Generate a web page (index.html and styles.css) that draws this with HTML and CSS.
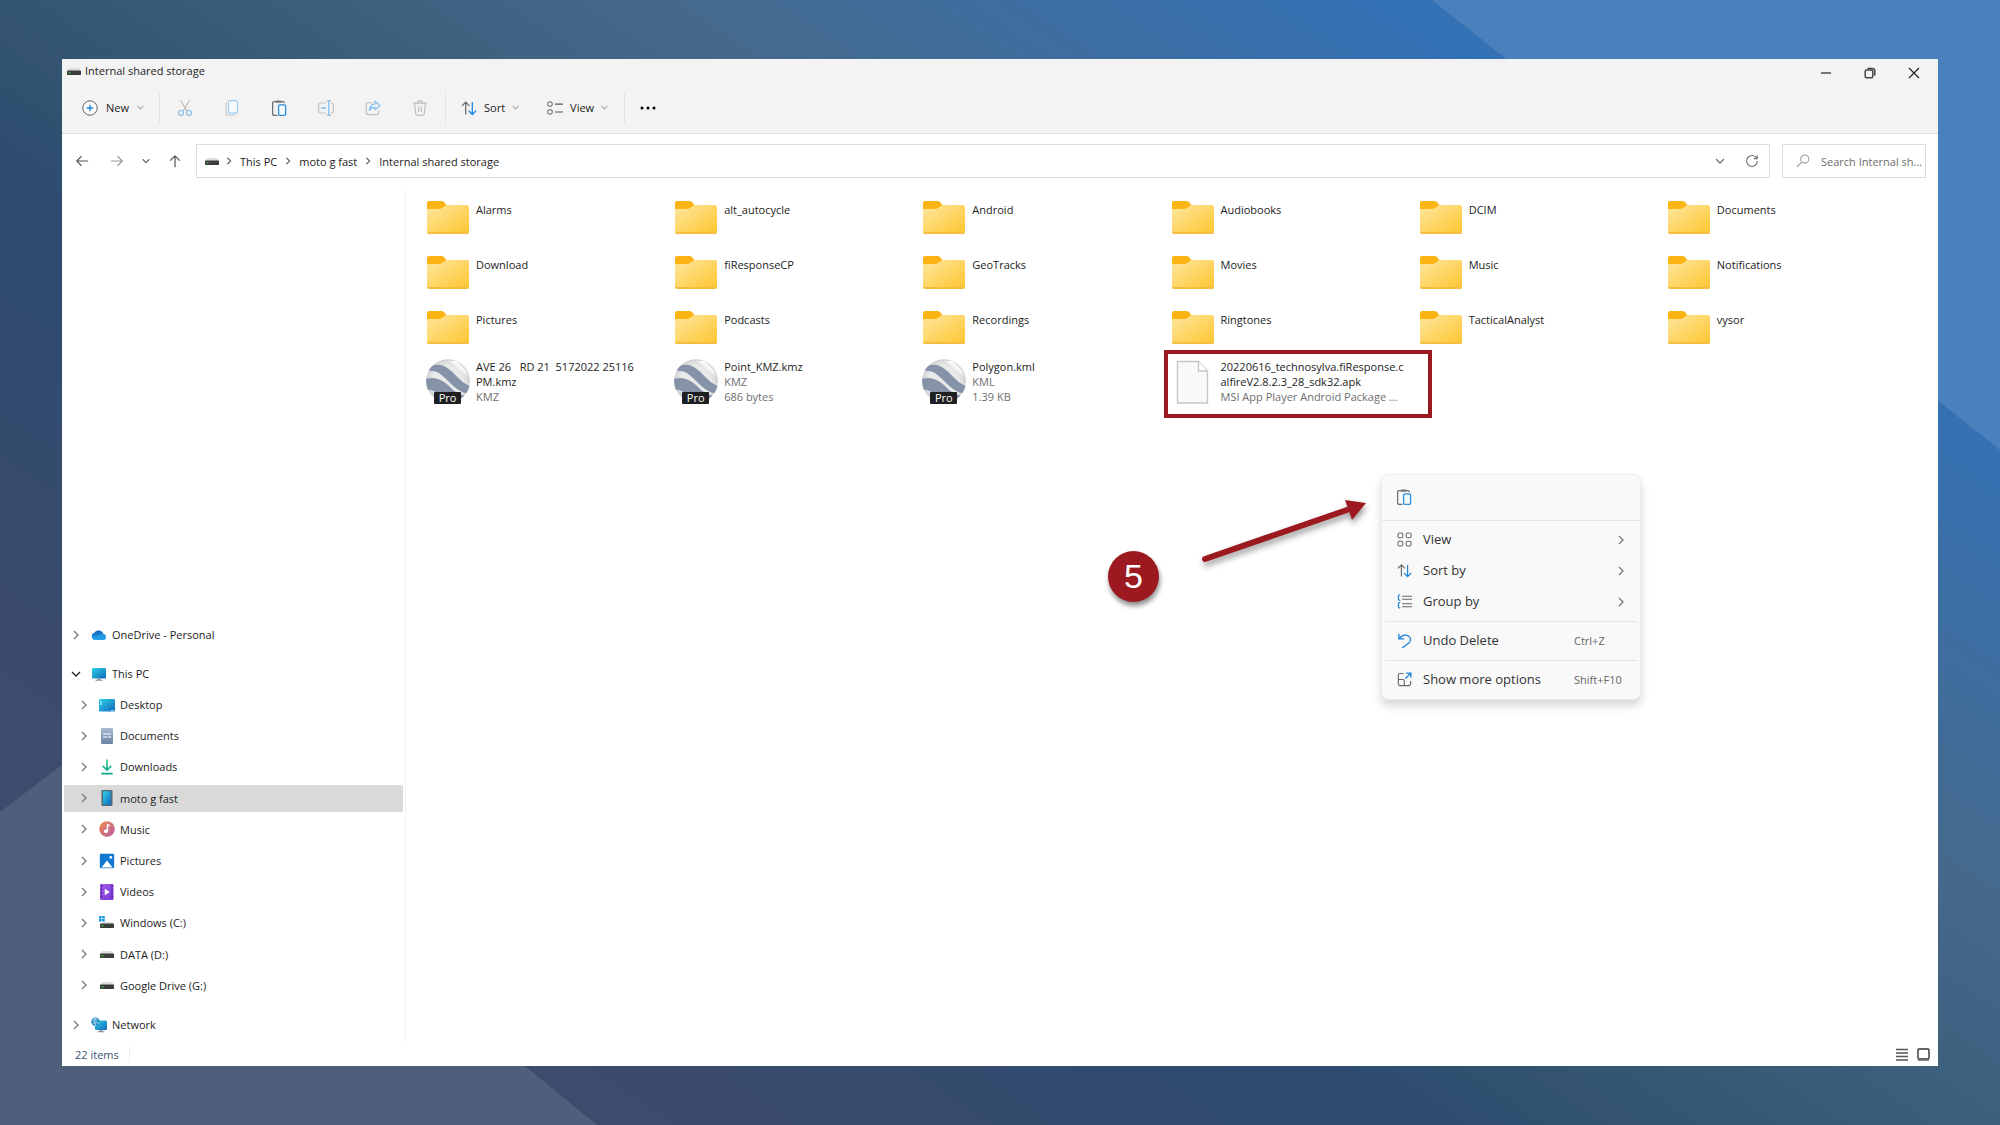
FILE: index.html
```html
<!DOCTYPE html>
<html lang="en">
<head>
<meta charset="utf-8">
<title>Internal shared storage</title>
<link rel="stylesheet" href="styles.css">
</head>
<body>
<svg class="defs" width="0" height="0" aria-hidden="true">
  <defs>
    <linearGradient id="g-folder" x1="0" y1="0" x2="1" y2="1"><stop offset="0" stop-color="#ffe7a0"/><stop offset="1" stop-color="#fec52e"/></linearGradient>
    <linearGradient id="g-screen" x1="0" y1="0" x2="1" y2="1"><stop offset="0" stop-color="#2fd0e6"/><stop offset="1" stop-color="#1069bd"/></linearGradient>
    <linearGradient id="g-cloud" x1="0" y1="0" x2="0" y2="1"><stop offset="0" stop-color="#0d5fc0"/><stop offset="1" stop-color="#28a8ea"/></linearGradient>
    <linearGradient id="g-doc" x1="0" y1="0" x2="0" y2="1"><stop offset="0" stop-color="#a9b9d0"/><stop offset="1" stop-color="#6a83a8"/></linearGradient>
    <linearGradient id="g-music" x1="0" y1="0" x2="1" y2="1"><stop offset="0" stop-color="#f08a4b"/><stop offset="1" stop-color="#b65aa8"/></linearGradient>
    <linearGradient id="g-down" x1="0" y1="0" x2="0" y2="1"><stop offset="0" stop-color="#35c88a"/><stop offset="1" stop-color="#12a892"/></linearGradient>
    <linearGradient id="g-video" x1="0" y1="0" x2="1" y2="1"><stop offset="0" stop-color="#a35bea"/><stop offset="1" stop-color="#7a38d8"/></linearGradient>
    <radialGradient id="g-globe" cx=".5" cy=".5" r=".5"><stop offset=".7" stop-color="#e9e9ea"/><stop offset="1" stop-color="#cfd0d2"/></radialGradient>
    <clipPath id="c-globe"><circle cx="22" cy="22" r="22"/></clipPath>
  </defs>
  <symbol id="folder" viewBox="0 0 44 46">
    <path d="M1 9a2 2 0 0 1 2-2h12q2 0 3 1l3 4v6H1z" fill="#fbb414"/>
    <path d="M1 16q0-1 1-1h11q2 0 3-1l3-2q1-1 3-1h19q2 0 2 2v25q0 2-2 2H3q-2 0-2-2z" fill="url(#g-folder)"/>
    <path d="M1 37v1q0 2 2 2h38q2 0 2-2v-1q0 1-2 1H3q-2 0-2-1z" fill="#f3be40"/>
  </symbol>
  <symbol id="globe" viewBox="0 0 44 46">
    <g clip-path="url(#c-globe)">
      <circle cx="22" cy="22" r="22" fill="url(#g-globe)"/>
      <path d="M3 9C10 4 17 5 24 11s13 14 20 16v8c-10-1-17-8-23-14S10 11 3 12z" fill="#8692a7"/>
      <path d="M0 20c9-3 17 1 24 8s12 9 19 9l-4 7H20C14 38 9 29 0 31z" fill="#8692a7"/>
      <path d="M22 2c8 3 14 11 20 15l-3-7-8-8z" fill="#f7f7f7"/>
    </g>
    <rect x="8" y="33" width="27" height="12" rx="1" fill="#1d1f21"/>
  </symbol>
  <symbol id="file" viewBox="0 0 44 46">
    <path d="M6.500 2.500h21l9 9.500v32h-30z" fill="#f9f9f9" stroke="#c6c6c6" stroke-width="1.400"/>
    <path d="M27.500 2.500V12h9" fill="#fff" stroke="#c6c6c6" stroke-width="1.400"/>
  </symbol>
  <symbol id="drive" viewBox="0 0 16 16">
    <path d="M3 5h10l2 3H1z" fill="#dedede"/><rect x="1" y="7.500" width="14" height="4.500" rx=".8" fill="#3a3d3b"/><rect x="2.500" y="9" width="2" height="1.500" fill="#3fae49"/>
  </symbol>
  <symbol id="windrive" viewBox="0 0 16 16">
    <path d="M4 7h9l2 2H1z" fill="#dedede"/><rect x="1" y="8.500" width="14" height="4.500" rx=".8" fill="#3a3d3b"/><rect x="2.500" y="10" width="2" height="1.500" fill="#3fae49"/>
    <path d="M0 1h2.600v2.400H0zM3.200 1h2.600v2.400H3.200zM0 4h2.600v2.400H0zM3.200 4h2.600v2.400H3.200z" fill="#1496e0"/>
  </symbol>
  <symbol id="cloud" viewBox="0 0 16 16">
    <path d="M4 13a3.700 3.700 0 0 1-.7-7.200A5 5 0 0 1 12.300 7 3.100 3.100 0 0 1 13 13z" fill="url(#g-cloud)"/>
    <path d="M2 12 9 7.500q2-.8 3.500-.3A3.100 3.100 0 0 1 13 13H4q-1.300-.2-2-1z" fill="#2aa0ea" opacity=".7"/>
  </symbol>
  <symbol id="pc" viewBox="0 0 16 16"><rect x="1" y="2" width="14" height="10.500" rx="1" fill="url(#g-screen)"/><path d="M6.500 12.500h3v1.300h2v1h-7v-1h2z" fill="#8a9299"/></symbol>
  <symbol id="desktop" viewBox="0 0 16 16"><rect x="0" y="2" width="16" height="12.500" rx="1.200" fill="url(#g-screen)"/><path d="M2 4v4" stroke="#c9f4fb" stroke-width="1"/><path d="M12 13.500h3" stroke="#9edcf5" stroke-width="1"/></symbol>
  <symbol id="document" viewBox="0 0 16 16"><rect x="2" y="0" width="12" height="16" rx="1.200" fill="url(#g-doc)"/><path d="M4 6h8M4 9h4M9 9h3" stroke="#fff" stroke-width="1.200"/></symbol>
  <symbol id="download" viewBox="0 0 16 16"><path d="M8 .5v10M3.700 6.800 8 11l4.300-4.200M2.300 14.700h11.400" fill="none" stroke="url(#g-down)" stroke-width="1.700"/></symbol>
  <symbol id="phone" viewBox="0 0 16 16"><rect x="2.500" y="0" width="11" height="16" rx="1.300" fill="#566572"/><rect x="4" y="1.200" width="8" height="13.600" fill="url(#g-screen)"/></symbol>
  <symbol id="music" viewBox="0 0 16 16"><circle cx="8" cy="8" r="7.800" fill="url(#g-music)"/><path d="M8.500 10V3.500l2.500 1.300" fill="none" stroke="#fff" stroke-width="1.300"/><circle cx="7" cy="10.200" r="1.900" fill="#fff"/></symbol>
  <symbol id="picture" viewBox="0 0 16 16"><rect x=".8" y=".8" width="14.400" height="14.400" rx="1.200" fill="#1378cf"/><path d="m2.500 14.500 5.500-7 5.500 7z" fill="#fff"/><circle cx="11.800" cy="4.300" r="1.400" fill="#fff"/></symbol>
  <symbol id="video" viewBox="0 0 16 16"><rect x="1" y="0" width="13.500" height="16" rx="1" fill="url(#g-video)"/><path d="M2.500 1v14M13 1v14" stroke="#4d1a9c" stroke-width="1.300" stroke-dasharray="2 1.500"/><path d="m5.800 4.800 5 3.200-5 3.200z" fill="#fff"/></symbol>
  <symbol id="network" viewBox="0 0 16 16"><rect x="4" y="3.500" width="12" height="9.500" rx="1" fill="url(#g-screen)"/><path d="M8.500 13h3v1.200h2v1h-7v-1h2z" fill="#8a9299"/><circle cx="4.500" cy="4.800" r="4.300" fill="#2e93c8"/><path d="M1.500 3.500Q4 1 6.500 2.500M2 6.500q3-3 6 0M4.500.5Q2.500 5 5 9" fill="none" stroke="#a8dcf2" stroke-width=".9"/></symbol>
  <symbol id="right" viewBox="0 0 10 10"><path d="m3 1 4 4-4 4" fill="none" stroke="currentColor" stroke-width="1.300"/></symbol>
  <symbol id="down" viewBox="0 0 10 10"><path d="m1 3 4 4 4-4" fill="none" stroke="currentColor" stroke-width="1.300"/></symbol>
  <symbol id="plus" viewBox="0 0 16 16"><circle cx="8" cy="8" r="7.200" fill="#fafafa" stroke="#666"/><path d="M8 4.800v6.400M4.800 8h6.400" stroke="#1f86dc" stroke-width="1.300"/></symbol>
  <symbol id="cut" viewBox="0 0 16 16"><path d="M3.500.5 10 11M12.500.5 6 11" stroke="#b9b9b9" stroke-width="1.100"/><circle cx="4" cy="13" r="2.500" fill="none" stroke="#85bdec" stroke-width="1.200"/><circle cx="12" cy="13" r="2.500" fill="none" stroke="#85bdec" stroke-width="1.200"/></symbol>
  <symbol id="copy" viewBox="0 0 16 16"><rect x="4.500" y=".6" width="9" height="12.600" rx="1.600" fill="#f5fafe" stroke="#9ccbf0" stroke-width="1.200"/><path d="M3 2.500Q2 3 2 4.500v8q0 2.800 2.800 2.800h4.400q1.300 0 2-.8" fill="none" stroke="#c4c4c4" stroke-width="1.100"/></symbol>
  <symbol id="paste" viewBox="0 0 16 16"><path d="M6.500 15.400H3.300q-1.700 0-1.700-1.700V3.300q0-1.700 1.700-1.700h8.400q1.600 0 1.600 1.700" fill="none" stroke="#6b6b6b" stroke-width="1.200"/><rect x="4.500" y=".4" width="6" height="2.400" rx="1" fill="#777"/><rect x="7.600" y="4.900" width="7" height="10.500" rx="1.300" fill="#f5fafe" stroke="#2b8de0" stroke-width="1.300"/></symbol>
  <symbol id="rename" viewBox="0 0 16 16"><path d="M8.500 3H2.300Q.6 3 .6 4.700v6.600Q.6 13 2.300 13h6.200M13 3q2.400 0 2.400 2v6q0 2-2.400 2" fill="none" stroke="#c2c2c2" stroke-width="1.200"/><path d="M8.800.6h4M8.800 15.400h4M10.800.6v14.800M3 8h5" fill="none" stroke="#85bdec" stroke-width="1.300"/></symbol>
  <symbol id="share" viewBox="0 0 16 16"><path d="M7 2.600H3.300q-2 0-2 2v8q0 2 2 2h8.400q2 0 2-2v-2" fill="none" stroke="#c2c2c2" stroke-width="1.200"/><path d="M10 1.200 15 5.600l-5 4.300V7.400Q6.500 7.200 4.500 10.500 5 4.300 10 3.800z" fill="none" stroke="#85bdec" stroke-width="1.200" stroke-linejoin="round"/></symbol>
  <symbol id="trash" viewBox="0 0 16 16"><path d="M1 3.200h14M5.500 3q0-2.300 2.500-2.300T10.500 3M2.500 3.500l1.200 10q.2 1.800 2 1.800h4.600q1.800 0 2-1.800l1.200-10M6.600 6.500v5.500M9.400 6.500v5.500" fill="none" stroke="#c0c0c0" stroke-width="1.200"/></symbol>
  <symbol id="sort" viewBox="0 0 16 16"><path d="M4.700 14.500V2M1 5.800 4.700 2l3.700 3.800" fill="none" stroke="#666" stroke-width="1.200"/><path d="M11.300 2v12.500M7.700 10.700l3.600 3.800 3.700-3.800" fill="none" stroke="#1f86dc" stroke-width="1.300"/></symbol>
  <symbol id="view" viewBox="0 0 16 16"><rect x=".8" y="2" width="4.400" height="4.200" rx="1.400" fill="none" stroke="#555"/><rect x=".8" y="9.800" width="4.400" height="4.200" rx="1.400" fill="none" stroke="#555"/><path d="M8 4.200h8M8 12h8" stroke="#555" stroke-width="1.200"/></symbol>
  <symbol id="grid" viewBox="0 0 16 16"><g fill="none" stroke="#666" stroke-width="1.100"><rect x="1" y="1" width="5.200" height="5.200" rx="1.600"/><rect x="9.800" y="1" width="5.200" height="5.200" rx="1.600"/><rect x="1" y="9.800" width="5.200" height="5.200" rx="1.600"/><rect x="9.800" y="9.800" width="5.200" height="5.200" rx="1.600"/></g></symbol>
  <symbol id="group" viewBox="0 0 16 16"><path d="M5.500 2.500H16M5.500 5.500H16M5.500 10.500H16M5.500 13.500H16" stroke="#666" stroke-width="1.100"/><path d="M3.500.8q-2 0-2 1.700v2.700q0 1.500 2 1.500M3.500 9q-2 0-2 1.700v2.700q0 1.700 2 1.700" fill="none" stroke="#1f86dc" stroke-width="1.300"/></symbol>
  <symbol id="undo" viewBox="0 0 16 16"><path d="M2 .8v5.400h5.700M2.300 6q2.500-3.500 6-3.700Q13 2.200 14.300 6q.6 2.500-1.300 4.500L5.500 16" fill="none" stroke="#1f86dc" stroke-width="1.400"/></symbol>
  <symbol id="more" viewBox="0 0 16 16"><path d="M7 1.600H3q-1.600 0-1.600 1.600v9.600q0 1.700 1.600 1.700h9.800q1.700 0 1.700-1.700V9.500M1.500 8h4.700q1.600 0 1.600 1.600v4.900" fill="none" stroke="#666" stroke-width="1.200"/><path d="M9.800 1.200h5v5M14.600 1.400 9 7" fill="none" stroke="#1f86dc" stroke-width="1.500"/></symbol>
  <symbol id="arrow" viewBox="0 0 16 16"><path d="M15 8H2M7.500 2.500 2 8l5.500 5.500" fill="none" stroke="currentColor" stroke-width="1.400"/></symbol>
  <symbol id="refresh" viewBox="0 0 16 16"><path d="M13.500 5A6.200 6.200 0 1 0 14.200 8M14 1.500V5.300h-4" fill="none" stroke="#777" stroke-width="1.300"/></symbol>
  <symbol id="lens" viewBox="0 0 16 16"><circle cx="10" cy="5.800" r="4.600" fill="none" stroke="#999" stroke-width="1.200"/><path d="m6.700 9.300-5.700 5.500" stroke="#999" stroke-width="1.200"/></symbol>
</svg>

<svg class="backdrop" viewBox="0 0 2000 1125" preserveAspectRatio="none" aria-hidden="true">
  <path d="M1432 0H2000V450z" fill="#4a80bb"/>
  <path d="M0 812 112 727 597 1125H0z" fill="#4f5e7b"/>
</svg>

<div class="window">
  <header class="top">
    <div class="titlebar">
      <svg class="i16"><use href="#drive"/></svg>
      <h1>Internal shared storage</h1>
      <div class="controls">
        <button aria-label="Minimize"><svg class="i12" viewBox="0 0 12 12"><path d="M1 6h10" stroke="#333" stroke-width="1.300"/></svg></button>
        <button aria-label="Restore"><svg class="i12" viewBox="0 0 12 12"><rect x="1.200" y="3" width="7.600" height="7.800" rx="1.500" fill="none" stroke="#444" stroke-width="1.500"/><path d="M3.500 1.500H8Q10.800 1.500 10.800 4v4.500" fill="none" stroke="#444" stroke-width="1.500"/></svg></button>
        <button aria-label="Close"><svg class="i12" viewBox="0 0 12 12"><path d="m1 1 10 10M11 1 1 11" stroke="#222" stroke-width="1.200"/></svg></button>
      </div>
    </div>
    <div class="toolbar">
      <button class="cmd cmd-new"><svg class="i16"><use href="#plus"/></svg>New<svg class="i7"><use href="#down"/></svg></button>
      <div class="tools">
        <button aria-label="Cut"><svg class="i16"><use href="#cut"/></svg></button>
        <button aria-label="Copy"><svg class="i16"><use href="#copy"/></svg></button>
        <button aria-label="Paste"><svg class="i16"><use href="#paste"/></svg></button>
        <button aria-label="Rename"><svg class="i16"><use href="#rename"/></svg></button>
        <button aria-label="Share"><svg class="i16"><use href="#share"/></svg></button>
        <button aria-label="Delete"><svg class="i16"><use href="#trash"/></svg></button>
      </div>
      <div class="arrange">
        <button class="cmd"><svg class="i16"><use href="#sort"/></svg>Sort<svg class="i7"><use href="#down"/></svg></button>
        <button class="cmd"><svg class="i16"><use href="#view"/></svg>View<svg class="i7"><use href="#down"/></svg></button>
      </div>
      <button class="dots" aria-label="See more"><svg width="16" height="4" viewBox="0 0 16 4"><circle cx="2" cy="2" r="1.500"/><circle cx="8" cy="2" r="1.500"/><circle cx="14" cy="2" r="1.500"/></svg></button>
    </div>
  </header>

  <div class="navbar">
    <div class="history">
      <button aria-label="Back"><svg class="i14"><use href="#arrow"/></svg></button>
      <button class="dim" aria-label="Forward"><svg class="i14 flip"><use href="#arrow"/></svg></button>
      <button class="recent" aria-label="Recent locations"><svg class="i8"><use href="#down"/></svg></button>
      <button aria-label="Up"><svg class="i14 up"><use href="#arrow"/></svg></button>
    </div>
    <nav class="address" aria-label="Address">
      <svg class="i16"><use href="#drive"/></svg>
      <svg class="i8"><use href="#right"/></svg><a href="#">This PC</a>
      <svg class="i8"><use href="#right"/></svg><a href="#">moto g fast</a>
      <svg class="i8"><use href="#right"/></svg><a href="#">Internal shared storage</a>
      <button class="push" aria-label="Previous locations"><svg class="i10"><use href="#down"/></svg></button>
      <button aria-label="Refresh"><svg class="i14"><use href="#refresh"/></svg></button>
    </nav>
    <label class="search"><svg class="i14"><use href="#lens"/></svg><input type="text" aria-label="Search" placeholder="Search Internal sh..."></label>
  </div>

  <div class="body">
    <nav class="tree" aria-label="Folders">
      <a class="node" href="#"><svg class="i10"><use href="#right"/></svg><svg class="i16"><use href="#cloud"/></svg>OneDrive - Personal</a>
      <a class="node open" href="#"><svg class="i10"><use href="#down"/></svg><svg class="i16"><use href="#pc"/></svg>This PC</a>
      <ul>
        <li><a class="node" href="#"><svg class="i10"><use href="#right"/></svg><svg class="i16"><use href="#desktop"/></svg>Desktop</a></li>
        <li><a class="node" href="#"><svg class="i10"><use href="#right"/></svg><svg class="i16"><use href="#document"/></svg>Documents</a></li>
        <li><a class="node" href="#"><svg class="i10"><use href="#right"/></svg><svg class="i16"><use href="#download"/></svg>Downloads</a></li>
        <li><a class="node selected" href="#"><svg class="i10"><use href="#right"/></svg><svg class="i16"><use href="#phone"/></svg>moto g fast</a></li>
        <li><a class="node" href="#"><svg class="i10"><use href="#right"/></svg><svg class="i16"><use href="#music"/></svg>Music</a></li>
        <li><a class="node" href="#"><svg class="i10"><use href="#right"/></svg><svg class="i16"><use href="#picture"/></svg>Pictures</a></li>
        <li><a class="node" href="#"><svg class="i10"><use href="#right"/></svg><svg class="i16"><use href="#video"/></svg>Videos</a></li>
        <li><a class="node" href="#"><svg class="i10"><use href="#right"/></svg><svg class="i16"><use href="#windrive"/></svg>Windows (C:)</a></li>
        <li><a class="node" href="#"><svg class="i10"><use href="#right"/></svg><svg class="i16"><use href="#drive"/></svg>DATA (D:)</a></li>
        <li><a class="node" href="#"><svg class="i10"><use href="#right"/></svg><svg class="i16"><use href="#drive"/></svg>Google Drive (G:)</a></li>
      </ul>
      <a class="node network" href="#"><svg class="i10"><use href="#right"/></svg><svg class="i16"><use href="#network"/></svg>Network</a>
    </nav>

    <main class="pane">
      <div class="files">
        <div class="item"><svg class="big"><use href="#folder"/></svg><p>Alarms</p></div>
        <div class="item"><svg class="big"><use href="#folder"/></svg><p>alt_autocycle</p></div>
        <div class="item"><svg class="big"><use href="#folder"/></svg><p>Android</p></div>
        <div class="item"><svg class="big"><use href="#folder"/></svg><p>Audiobooks</p></div>
        <div class="item"><svg class="big"><use href="#folder"/></svg><p>DCIM</p></div>
        <div class="item"><svg class="big"><use href="#folder"/></svg><p>Documents</p></div>
        <div class="item"><svg class="big"><use href="#folder"/></svg><p>Download</p></div>
        <div class="item"><svg class="big"><use href="#folder"/></svg><p>fiResponseCP</p></div>
        <div class="item"><svg class="big"><use href="#folder"/></svg><p>GeoTracks</p></div>
        <div class="item"><svg class="big"><use href="#folder"/></svg><p>Movies</p></div>
        <div class="item"><svg class="big"><use href="#folder"/></svg><p>Music</p></div>
        <div class="item"><svg class="big"><use href="#folder"/></svg><p>Notifications</p></div>
        <div class="item"><svg class="big"><use href="#folder"/></svg><p>Pictures</p></div>
        <div class="item"><svg class="big"><use href="#folder"/></svg><p>Podcasts</p></div>
        <div class="item"><svg class="big"><use href="#folder"/></svg><p>Recordings</p></div>
        <div class="item"><svg class="big"><use href="#folder"/></svg><p>Ringtones</p></div>
        <div class="item"><svg class="big"><use href="#folder"/></svg><p>TacticalAnalyst</p></div>
        <div class="item"><svg class="big"><use href="#folder"/></svg><p>vysor</p></div>
        <div class="item"><span class="earth"><svg class="big"><use href="#globe"/></svg><b>Pro</b></span><p><span class="pre">AVE 26   RD 21  5172022 25116</span><br>PM.kmz<small>KMZ</small></p></div>
        <div class="item"><span class="earth"><svg class="big"><use href="#globe"/></svg><b>Pro</b></span><p>Point_KMZ.kmz<small>KMZ</small><small>686 bytes</small></p></div>
        <div class="item"><span class="earth"><svg class="big"><use href="#globe"/></svg><b>Pro</b></span><p>Polygon.kml<small>KML</small><small>1.39 KB</small></p></div>
        <div class="item marked"><svg class="big"><use href="#file"/></svg><p>20220616_technosylva.fiResponse.c<br>alfireV2.8.2.3_28_sdk32.apk<small>MSI App Player Android Package ...</small></p></div>
      </div>

      <div class="step">5</div>
      <svg class="pointer" viewBox="0 0 180 80" aria-hidden="true">
        <path d="m9 63 142-49" fill="none" stroke="#9c1a1f" stroke-width="6" stroke-linecap="round"/>
        <path d="m149 4 21 3-14 17z" fill="#9c1a1f"/>
      </svg>

      <div class="menu" role="menu">
        <div class="quick"><button aria-label="Paste"><svg class="i16"><use href="#paste"/></svg></button></div>
        <div class="section">
          <button role="menuitem"><svg class="i15"><use href="#grid"/></svg>View<svg class="i10 push"><use href="#right"/></svg></button>
          <button role="menuitem"><svg class="i15"><use href="#sort"/></svg>Sort by<svg class="i10 push"><use href="#right"/></svg></button>
          <button role="menuitem"><svg class="i15"><use href="#group"/></svg>Group by<svg class="i10 push"><use href="#right"/></svg></button>
        </div>
        <div class="section"><button role="menuitem"><svg class="i15"><use href="#undo"/></svg>Undo Delete<kbd>Ctrl+Z</kbd></button></div>
        <div class="section"><button role="menuitem"><svg class="i15"><use href="#more"/></svg>Show more options<kbd>Shift+F10</kbd></button></div>
      </div>
    </main>
  </div>

  <footer class="status">
    <span>22 items</span>
    <div class="modes">
      <button aria-label="Details"><svg width="13" height="13" viewBox="0 0 13 13"><path d="M0 1.500h12M0 5h12M0 8.500h12M0 12h12" stroke="#555" stroke-width="1.700"/></svg></button>
      <button aria-label="Large icons"><svg width="13" height="13" viewBox="0 0 13 13"><rect x="1" y="1" width="11" height="10" rx="1" fill="none" stroke="#333" stroke-width="1.400"/><path d="M1 11.500h11" stroke="#666" stroke-width="2.500"/></svg></button>
    </div>
  </footer>
</div>
</body>
</html>
```
FILE: styles.css
```css
*, ::before, ::after { box-sizing: border-box; }

body {
  margin: 0;
  min-height: 100vh;
  padding: 59px 62px;
  display: flex;
  position: relative;
  font: 11px/15px "Open Sans", "Noto Sans", sans-serif;
  color: #1c1c1c;
  background: linear-gradient(34deg, #3d4b6d 0%, #3d4b6d 18%, #2c4b6f 38%, #355672 46%, #45698a 63%, #3871b0 80%, #3371b5 83%, #3f78b8 100%);
}

h1, p, ul { margin: 0; padding: 0; font: inherit; }
ul { list-style: none; }
a { color: inherit; text-decoration: none; }
button { margin: 0; padding: 0; border: 0; background: none; font: inherit; color: inherit; display: flex; align-items: center; }
svg { flex: none; display: block; }

.defs { position: absolute; }
.backdrop { position: absolute; inset: 0; width: 100%; height: 100%; }

.i7 { width: 7px; height: 7px; color: #777; }
.i8 { width: 8px; height: 8px; color: #444; }
.i10 { width: 10px; height: 10px; color: #777; }
.i12 { width: 12px; height: 12px; }
.i14 { width: 14px; height: 14px; }
.i15 { width: 15px; height: 15px; }
.i16 { width: 16px; height: 16px; }
.flip { transform: rotate(180deg); }
.up { transform: rotate(90deg); }
.push { margin-left: auto; }

.window { position: relative; flex: 1; display: flex; flex-direction: column; background: #fff; }

.top { background: #f3f3f3; border-bottom: 1px solid #e0e0e0; }
.titlebar { display: flex; align-items: center; height: 23px; padding-left: 4px; gap: 3px; }
.controls { display: flex; align-self: flex-end; gap: 32px; margin-left: auto; padding: 0 18px 3px 0; }

.toolbar { display: flex; align-items: center; height: 51px; padding-left: 20px; }
.cmd { gap: 7px; }
.cmd-new { width: 77px; gap: 8px; }
.tools { display: flex; align-items: center; gap: 31px; height: 32px; padding: 0 17px; border: solid #e4e4e4; border-width: 0 1px; }
.arrange { display: flex; align-items: center; gap: 28px; height: 32px; padding: 0 16px 0 15px; border-right: 1px solid #e4e4e4; }
.dots { padding-left: 15px; }

.navbar { display: flex; align-items: flex-start; height: 56px; padding: 10px 12px 0 0; }
.history { display: flex; align-items: center; width: 134px; height: 34px; padding-left: 13px; gap: 21px; color: #555; }
.history .recent { margin: 0 -3px; }
.history .dim { color: #999; }
.address { flex: 1; display: flex; align-items: center; height: 34px; padding: 0 10px 0 7px; gap: 7px; border: 1px solid #dcdcdc; }
.address > .i16 { margin-right: -2px; }
.address button + button { margin-left: 13px; }
.search { display: flex; align-items: center; width: 144px; height: 34px; margin-left: 12px; padding-left: 13px; gap: 11px; border: 1px solid #dcdcdc; }
.search input { flex: 1; min-width: 0; padding: 0; border: 0; outline: 0; background: none; font: inherit; }
.search input::placeholder { color: #6d6d6d; opacity: 1; }

.body { flex: 1; display: flex; }
.tree { width: 344px; display: flex; flex-direction: column; justify-content: flex-end; padding: 0 2px 3px; border-right: 1px solid #f2f2f2; }
.node { display: flex; align-items: center; height: 31px; padding-left: 7px; gap: 5px; border-radius: 2px; }
.node .i10 { margin-right: 5px; }
.open { margin-top: 8px; }
.open .i10 { color: #222; }
.network { margin-top: 8px; }
.tree ul { display: grid; grid-auto-rows: 1fr; height: 312px; }
.tree li { display: flex; align-items: center; }
.tree li .node { flex: 1; height: 27px; padding-left: 15px; }
.tree .selected { background: #d9d9d9; }

.pane { flex: 1; position: relative; padding: 0 23px 0 20px; }
.files { display: grid; grid-template-columns: repeat(6, 1fr); grid-template-rows: repeat(4, 1fr); height: 219px; }
.item { display: flex; align-items: center; gap: 6px; position: relative; white-space: nowrap; }
.item p { min-height: 30px; }
.item small { display: block; font-size: 11px; color: #6e6e6e; }
.pre { white-space: pre; }
.big { width: 44px; height: 46px; }
.earth { position: relative; }
.earth b { position: absolute; left: 8px; bottom: 1px; width: 27px; font-weight: 400; font-size: 11px; line-height: 12px; text-align: center; color: #fff; }
.marked::after { content: ""; position: absolute; left: -7px; top: -4px; width: 268px; height: 68px; border: 4px solid #9c1a1f; }

.step { position: absolute; left: 702px; top: 361px; width: 51px; height: 51px; border-radius: 50%; background: #9c1a1f; color: #fff; font: 34px/51px "Liberation Sans", Arial, sans-serif; text-align: center; box-shadow: 1px 4px 5px rgba(0, 0, 0, .45); }
.pointer { position: absolute; left: 790px; top: 306px; width: 180px; height: 80px; filter: drop-shadow(1px 4px 3px rgba(0, 0, 0, .4)); }

.menu { position: absolute; left: 975px; top: 284px; width: 260px; border: 1px solid #ececec; border-radius: 8px; background: #f9f9f9; box-shadow: 0 6px 10px rgba(0, 0, 0, .16); font-size: 13px; color: #333; }
.quick { height: 46px; padding: 14px; border-bottom: 1px solid #e6e6e6; }
.section { margin: 0 3px; padding: 3px 0 4px; }
.section + .section { border-top: 1px solid #e6e6e6; }
.section button { width: 100%; height: 31px; padding: 0 11px 0 12px; gap: 11px; }
.menu kbd { width: 52px; margin-left: auto; font: inherit; font-size: 11px; text-align: left; white-space: nowrap; color: #666; }

.status { display: flex; align-items: center; height: 23px; padding: 0 8px 0 13px; color: #3d5472; }
.status span { padding-right: 10px; border-right: 1px solid #eee; }
.modes { display: flex; gap: 8px; margin-left: auto; }
```
